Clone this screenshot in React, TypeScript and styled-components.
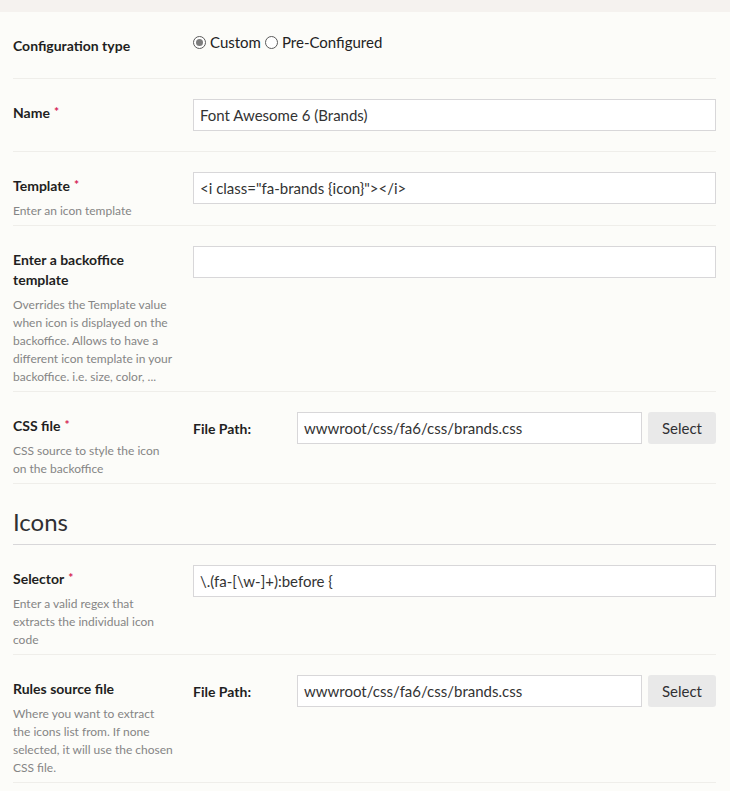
import React from 'react';
import styled, { createGlobalStyle, css } from 'styled-components';

const GlobalStyle = createGlobalStyle`
  body {
    margin: 0;
    background: #fcfcf9;
    font-family: Lato, "Open Sans", sans-serif;
    color: #1f1f22;
  }
  * {
    box-sizing: border-box;
  }
`;

const TopBar = styled.div`
  height: 12px;
  background: #f5f2ef;
`;

const Page = styled.div`
  padding: 0 14px 0 13px;
`;

const Row = styled.div`
  display: flex;
  padding: 20px 0 5px;
  border-bottom: 1px solid #efeeea;
`;

const LabelCol = styled.div`
  width: 180px;
  flex-shrink: 0;
  padding: 4px 20px 0 0;
`;

const Label = styled.div`
  font-size: 14px;
  font-weight: 700;
  line-height: 20px;
`;

const Required = styled.span`
  position: relative;
  top: -2px;
  margin-left: 4px;
  color: #d42054;
  font-size: 12px;
  line-height: 1;
`;

const Description = styled.div`
  margin-top: 6px;
  font-size: 12px;
  line-height: 18px;
  color: #858585;
`;

const Editor = styled.div`
  flex: 1;
  min-width: 0;
  padding-bottom: 15px;
`;

const TextInput = styled.div`
  height: 32px;
  width: 100%;
  flex: 1;
  border: 1px solid #d8d7d9;
  background: #fff;
  padding: 0 6px;
  font-size: 15px;
  line-height: 30px;
  color: #333;
  white-space: nowrap;
  overflow: hidden;
`;

const RadioList = styled.div`
  display: flex;
  align-items: flex-start;
  height: 26px;
  font-size: 15px;
  line-height: 20px;
  color: #222;
`;

const RadioItem = styled.label`
  display: inline-flex;
  align-items: center;
  margin-right: 4px;
`;

const RadioDot = styled.span<{ checked?: boolean }>`
  width: 13px;
  height: 13px;
  border-radius: 50%;
  border: 1px solid #5a5a5a;
  margin-right: 4px;
  position: relative;
  background: #fff;

  ${({ checked }) =>
    checked &&
    css`
      &::after {
        content: '';
        position: absolute;
        top: 2px;
        left: 2px;
        width: 7px;
        height: 7px;
        border-radius: 50%;
        background: #7d7d7d;
      }
    `}
`;

const FilePicker = styled.div`
  display: flex;
  align-items: center;
`;

const FileLabel = styled.div`
  width: 104px;
  flex-shrink: 0;
  font-size: 14px;
  font-weight: 700;
`;

const SelectButton = styled.button`
  height: 32px;
  width: 68px;
  margin-left: 6px;
  flex-shrink: 0;
  border: none;
  border-radius: 3px;
  background: #e9e9e9;
  font-family: inherit;
  font-size: 15px;
  color: #303033;
`;

const SectionTitle = styled.h2`
  margin: 23px 0 0;
  padding-bottom: 7px;
  font-size: 24px;
  font-weight: 400;
  line-height: 30px;
  color: #303033;
  border-bottom: 1px solid #d8d7d9;
`;

interface PropertyProps {
  label: string;
  required?: boolean;
  description?: string;
  children: React.ReactNode;
}

const Property: React.FC<PropertyProps> = ({ label, required, description, children }) => (
  <Row>
    <LabelCol>
      <Label>
        {label}
        {required && <Required>*</Required>}
      </Label>
      {description && <Description>{description}</Description>}
    </LabelCol>
    <Editor>{children}</Editor>
  </Row>
);

const FileField: React.FC<{ value: string }> = ({ value }) => (
  <FilePicker>
    <FileLabel>File Path:</FileLabel>
    <TextInput>{value}</TextInput>
    <SelectButton>Select</SelectButton>
  </FilePicker>
);

export default function App() {
  return (
    <>
      <GlobalStyle />
      <TopBar />
      <Page>
        <Property label="Configuration type">
          <RadioList>
            <RadioItem>
              <RadioDot checked />
              Custom
            </RadioItem>
            <RadioItem>
              <RadioDot />
              Pre-Configured
            </RadioItem>
          </RadioList>
        </Property>
        <Property label="Name" required>
          <TextInput>Font Awesome 6 (Brands)</TextInput>
        </Property>
        <Property label="Template" required description="Enter an icon template">
          <TextInput>{'<i class="fa-brands {icon}"></i>'}</TextInput>
        </Property>
        <Property
          label="Enter a backoffice template"
          description="Overrides the Template value when icon is displayed on the backoffice. Allows to have a different icon template in your backoffice. i.e. size, color, ..."
        >
          <TextInput />
        </Property>
        <Property label="CSS file" required description="CSS source to style the icon on the backoffice">
          <FileField value="wwwroot/css/fa6/css/brands.css" />
        </Property>

        <SectionTitle>Icons</SectionTitle>

        <Property
          label="Selector"
          required
          description="Enter a valid regex that extracts the individual icon code"
        >
          <TextInput>{'\\.(fa-[\\w-]+):before {'}</TextInput>
        </Property>
        <Property
          label="Rules source file"
          description="Where you want to extract the icons list from. If none selected, it will use the chosen CSS file."
        >
          <FileField value="wwwroot/css/fa6/css/brands.css" />
        </Property>
      </Page>
    </>
  );
}
